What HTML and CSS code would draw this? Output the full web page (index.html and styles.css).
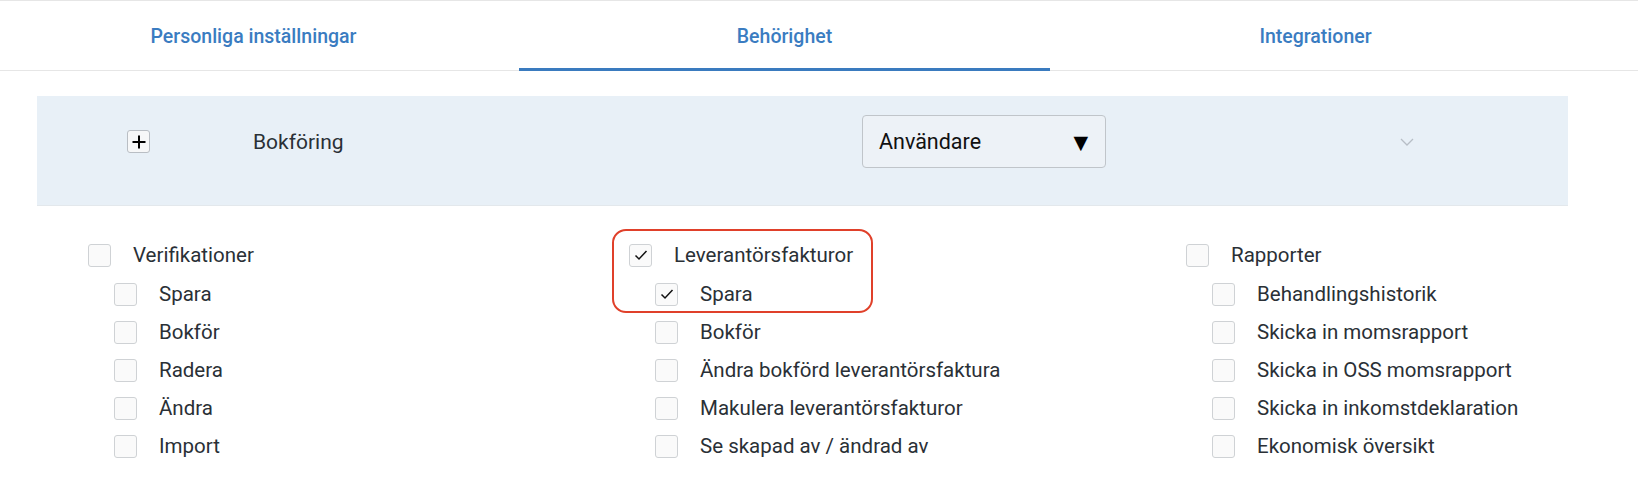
FILE: index.html
```html
<!DOCTYPE html>
<html lang="sv">
<head>
<meta charset="utf-8">
<title>Behörighet</title>
<link rel="stylesheet" href="styles.css">
</head>
<body>
<nav class="tabs">
  <div class="tab">Personliga inställningar</div>
  <div class="tab active">Behörighet</div>
  <div class="tab">Integrationer</div>
</nav>
<main class="content">
  <section class="panel">
    <div class="plus-cell"><span class="plus-btn"><svg width="14" height="14" viewBox="0 0 14 14"><path d="M7 0.5V13.5M0.5 7H13.5" stroke="#000" stroke-width="2" fill="none"/></svg></span></div>
    <div class="panel-title">Bokföring</div>
    <div class="select-cell">
      <div class="select"><span>Användare</span><span class="arrow">▼</span></div>
    </div>
    <div class="chevron">
      <svg width="14" height="8" viewBox="0 0 14 8"><polyline points="1,1 7,7 13,1" fill="none" stroke="#b7bec6" stroke-width="1.3"/></svg>
    </div>
  </section>
  <section class="lists">
    <div class="col">
      <div class="row parent"><span class="cb"></span><span class="lbl">Verifikationer</span></div>
      <div class="row child"><span class="cb"></span><span class="lbl">Spara</span></div>
      <div class="row child"><span class="cb"></span><span class="lbl">Bokför</span></div>
      <div class="row child"><span class="cb"></span><span class="lbl">Radera</span></div>
      <div class="row child"><span class="cb"></span><span class="lbl">Ändra</span></div>
      <div class="row child"><span class="cb"></span><span class="lbl">Import</span></div>
    </div>
    <div class="col highlighted">
      <div class="highlight"></div>
      <div class="row parent"><span class="cb checked"><svg width="14" height="12" viewBox="0 0 14 12"><polyline points="1.5,6.5 5,10 12.5,2" fill="none" stroke="#111" stroke-width="1.5"/></svg></span><span class="lbl">Leverantörsfakturor</span></div>
      <div class="row child"><span class="cb checked"><svg width="14" height="12" viewBox="0 0 14 12"><polyline points="1.5,6.5 5,10 12.5,2" fill="none" stroke="#111" stroke-width="1.5"/></svg></span><span class="lbl">Spara</span></div>
      <div class="row child"><span class="cb"></span><span class="lbl">Bokför</span></div>
      <div class="row child"><span class="cb"></span><span class="lbl">Ändra bokförd leverantörsfaktura</span></div>
      <div class="row child"><span class="cb"></span><span class="lbl">Makulera leverantörsfakturor</span></div>
      <div class="row child"><span class="cb"></span><span class="lbl">Se skapad av / ändrad av</span></div>
    </div>
    <div class="col">
      <div class="row parent"><span class="cb"></span><span class="lbl">Rapporter</span></div>
      <div class="row child"><span class="cb"></span><span class="lbl">Behandlingshistorik</span></div>
      <div class="row child"><span class="cb"></span><span class="lbl">Skicka in momsrapport</span></div>
      <div class="row child"><span class="cb"></span><span class="lbl">Skicka in OSS momsrapport</span></div>
      <div class="row child"><span class="cb"></span><span class="lbl">Skicka in inkomstdeklaration</span></div>
      <div class="row child"><span class="cb"></span><span class="lbl">Ekonomisk översikt</span></div>
    </div>
  </section>
</main>
</body>
</html>
```
FILE: styles.css
```css
html, body {
  margin: 0;
  padding: 0;
  background: #ffffff;
  overflow: hidden;
}
body {
  font-family: Roboto, "Liberation Sans", sans-serif;
  color: #2a3036;
  width: 1638px;
  height: 494px;
}
.tabs {
  display: grid;
  grid-template-columns: 531px 531px 531px;
  margin-left: -12px;
  width: 1650px;
  height: 69px;
  border-top: 1px solid #e6e6e6;
  border-bottom: 1px solid #e6e6e6;
  box-sizing: content-box;
}
.tab {
  position: relative;
  display: flex;
  align-items: center;
  justify-content: center;
  padding-top: 1px;
  font-size: 19.5px;
  font-weight: 500;
  color: #3a7cc1;
}
.tab.active::after {
  content: "";
  position: absolute;
  left: 0;
  right: 0;
  bottom: -1px;
  height: 3px;
  background: #3a7bbf;
}
.content {
  padding: 25px 70px 0 37px;
}
.panel {
  display: grid;
  grid-template-columns: 126px 609px 538px 1fr;
  align-items: center;
  height: 110px;
  padding: 0 0 18px 90px;
  background: #e8f0f7;
  border-bottom: 1px solid #e3e8ec;
  box-sizing: border-box;
}
.plus-btn {
  display: flex;
  align-items: center;
  justify-content: center;
  width: 21px;
  height: 21px;
  border: 1px solid #b9bec4;
  border-radius: 3px;
  background: #f6f7f8;
}
.panel-title {
  font-size: 21px;
  color: #2a3036;
}
.select {
  display: flex;
  align-items: center;
  justify-content: space-between;
  width: 244px;
  height: 53px;
  padding: 0 17px 0 16px;
  box-sizing: border-box;
  border: 1px solid #c0c5ca;
  border-radius: 4px;
  background: #edf2f7;
  font-size: 21.5px;
  color: #111;
}
.arrow {
  font-size: 19px;
  color: #000;
  font-family: "DejaVu Sans", sans-serif;
}
.chevron {
  display: flex;
  align-items: center;
}
.lists {
  display: grid;
  grid-template-columns: 541px 557px 1fr;
  padding: 30px 0 0 51px;
}
.col {
  position: relative;
}
.row {
  display: flex;
  align-items: center;
  height: 38px;
  font-size: 20.5px;
}
.row.parent {
  margin-bottom: 1px;
}
.row.child {
  padding-left: 26px;
}
.cb {
  display: flex;
  align-items: center;
  justify-content: center;
  width: 21px;
  height: 21px;
  border: 1px solid #cfd2d5;
  border-radius: 3px;
  background: #fafafa;
  flex: none;
  margin-right: 22px;
}
.lbl {
  color: #2a3036;
}
.highlight {
  position: absolute;
  left: -17px;
  top: -7px;
  width: 261px;
  height: 84px;
  border: 2.5px solid #e0402a;
  border-radius: 14px;
  box-sizing: border-box;
  pointer-events: none;
}
```
